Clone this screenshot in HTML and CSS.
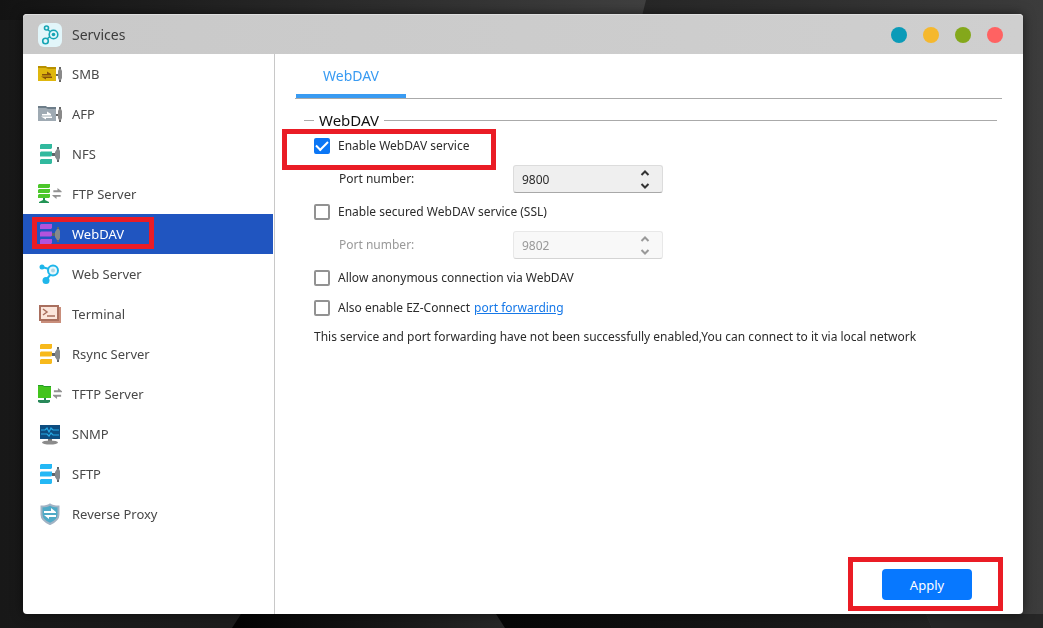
FILE: index.html
```html
<!DOCTYPE html>
<html lang="en">
<head>
<meta charset="utf-8">
<title>Services</title>
<link rel="stylesheet" href="styles.css">
</head>
<body>
<svg class="defs" aria-hidden="true">
  <defs>
    <symbol id="stack" viewBox="0 0 24 24">
      <path fill="#5f656a" d="M14 11h4v3h-4zM19 5h2v15h-2z"/>
      <path fill="#85898c" d="M19 7h2l1 2v7l-1 2h-2l-2-3v-5z"/>
      <path fill="currentColor" d="M3 2h11v4l-1 1H2V3zM3 9.500h11v4l-1 1H2v-4zM3 17h11v4l-1 1H2v-4z"/>
    </symbol>
    <symbol id="folder" viewBox="0 0 24 24">
      <path fill="#666" d="M18 12h2v2h-2zM21 5h2v15h-2z"/>
      <path fill="#898989" d="M20 9l1-2h2l1 2v7l-1 2h-2l-1-2z"/>
      <path class="folder-back" d="M0 4h8l1 1h9v4H0z"/>
      <path fill="currentColor" d="M0 6h8l2 1h8v12H0z"/>
      <path class="folder-arrows" d="M4 12h5V9.500l4 2.500v1.500H4zM14 14.500H3l5 3V16h6z"/>
    </symbol>
    <symbol id="swap" viewBox="0 0 10 12">
      <path fill="#929292" d="M1 2.500h4.500V0L10 3.500v1H1zM9 7.500H0v1L4.500 12V9.500H9z"/>
    </symbol>
  </defs>
</svg>
<svg class="wallpaper" viewBox="0 0 1043 628" preserveAspectRatio="none" aria-hidden="true">
  <defs>
    <linearGradient id="base"><stop offset="0" stop-color="#181818"/><stop offset=".6" stop-color="#262626"/><stop offset="1" stop-color="#3c3c3c"/></linearGradient>
    <linearGradient id="top"><stop offset="0" stop-color="#131313"/><stop offset="1" stop-color="#404040"/></linearGradient>
    <linearGradient id="band"><stop offset="0" stop-color="#030303"/><stop offset="1" stop-color="#272727"/></linearGradient>
    <linearGradient id="low"><stop offset="0" stop-color="#060606"/><stop offset="1" stop-color="#222"/></linearGradient>
  </defs>
  <path fill="url(#base)" d="M0 0h1043v628H0z"/>
  <path fill="url(#top)" d="M0 0h646l-5 20H0z"/>
  <path fill="url(#band)" d="M241 614h255l9 14H232z"/>
  <path fill="url(#low)" d="M496 614h430l6 14H505z"/>
  <path fill="#262626" d="M926 614h117v14H932z"/>
</svg>

<div class="desktop">
  <section class="window">
    <header class="titlebar">
      <svg class="app-icon" viewBox="0 0 24 24" aria-hidden="true">
        <rect width="24" height="24" rx="6" fill="#e2f6fa"/>
        <g fill="none" stroke="#16a5b4" stroke-width="1.600">
          <path d="M9.500 6.500l2.500 2M9 16l3-2.500"/>
          <circle cx="8.500" cy="5" r="2"/><circle cx="15.500" cy="11.500" r="4.300"/><circle cx="7.500" cy="18" r="2.800"/>
        </g>
        <circle cx="15.500" cy="11.500" r="1.800" fill="#16a5b4"/>
      </svg>
      <h1 class="title">Services</h1>
      <div class="window-buttons">
        <button class="dot teal" aria-label="Help"></button>
        <button class="dot amber" aria-label="Minimize"></button>
        <button class="dot green" aria-label="Maximize"></button>
        <button class="dot red" aria-label="Close"></button>
      </div>
    </header>

    <div class="body">
      <nav class="sidebar">
        <a class="item" href="#smb"><svg class="icon gold"><use href="#folder"/></svg>SMB</a>
        <a class="item" href="#afp"><svg class="icon slate"><use href="#folder"/></svg>AFP</a>
        <a class="item" href="#nfs"><svg class="icon mint"><use href="#stack"/></svg>NFS</a>
        <a class="item" href="#ftp"><svg class="icon" viewBox="0 0 24 24">
          <path fill="#4cc72b" d="M1 2h11v3l-1 1H0V3zM1 7h11v3l-1 1H0V8zM1 12h11v3l-1 1H0v-3z"/><path fill="#229455" d="M5 16h2v2l4 2v1H1v-1l4-2z"/>
          <use href="#swap" x="14" y="6" width="10" height="11"/></svg>FTP Server</a>
        <a class="item active" href="#webdav" aria-current="page"><svg class="icon violet"><use href="#stack"/></svg>WebDAV<span class="callout callout-nav"></span></a>
        <a class="item" href="#web"><svg class="icon" viewBox="0 0 24 24">
          <path fill="none" stroke="#1fb6ea" stroke-width="2" d="M4 5l7 2M13 12l-5 6"/>
          <circle cx="4" cy="5" r="2.500" fill="#1fb6ea"/><circle cx="8" cy="18.500" r="3.500" fill="#1fb6ea"/>
          <circle cx="15" cy="8.500" r="5" fill="#e9f8fd" stroke="#1fb6ea" stroke-width="2"/><circle cx="15" cy="8.500" r="2" fill="#b5d5e2"/></svg>Web Server</a>
        <a class="item" href="#terminal"><svg class="icon" viewBox="0 0 24 24">
          <path fill="#c98e7b" d="M3 5h20v16H3z"/><path fill="#fbe5db" stroke="#a96f5e" stroke-width="2" d="M2 4h18v14H2z"/>
          <path fill="none" stroke="#a96f5e" stroke-width="1.500" d="M5 7l4 3-4 3M9 14h8"/></svg>Terminal</a>
        <a class="item" href="#rsync"><svg class="icon orange"><use href="#stack"/></svg>Rsync Server</a>
        <a class="item" href="#tftp"><svg class="icon" viewBox="0 0 24 24">
          <path fill="#239c27" d="M0 3h5l1 1h7v3H0z"/><path fill="#43c41d" d="M0 4h5l1 1h7v11H0z"/><path fill="#29895a" d="M6 16h2v2h4v2l-2 1H2l-2-1v-2h6z"/>
          <use href="#swap" x="15" y="5" width="9" height="13"/></svg>TFTP Server</a>
        <a class="item" href="#snmp"><svg class="icon" viewBox="0 0 24 24">
          <path fill="#0d4d80" d="M2 3h20v14H2z"/><path fill="none" stroke="#25a9e5" stroke-width="1.200" d="M3 8h4l2-2 2 4 2-4 2 2h6M3 12h6l2 2 2-3 2 2h6"/>
          <path fill="#777" d="M10 17h4v2h-4z"/><ellipse cx="12" cy="20.500" rx="8" ry="2" fill="#8b8b8b"/></svg>SNMP</a>
        <a class="item" href="#sftp"><svg class="icon sky"><use href="#stack"/></svg>SFTP</a>
        <a class="item" href="#proxy"><svg class="icon" viewBox="0 0 24 24">
          <path fill="#4faac7" stroke="#a2b3c4" stroke-width="2" d="M12 2.500c2 1.500 5 2 8.500 2v8c0 5-4 7.500-8.500 9.500-4.500-2-8.500-4.500-8.500-9.500v-8c3.500 0 6.500-.5 8.500-2z"/>
          <path fill="#fff" d="M6 9h7V6l5 4v1H6zM18 13H6l5 4v-2h7z"/></svg>Reverse Proxy</a>
      </nav>

      <main class="content">
        <div class="tabs" role="tablist"><button class="tab" role="tab" aria-selected="true">WebDAV</button></div>
        <form class="form">
          <fieldset class="group">
            <legend class="legend">WebDAV</legend>
            <div class="row enable"><label class="check"><input class="box" type="checkbox" checked>Enable WebDAV service</label><span class="callout callout-enable"></span></div>
            <div class="row port">
              <label class="port-label" for="port">Port number:</label>
              <div class="spin"><input class="number" id="port" type="text" inputmode="numeric" value="9800">
                <div class="steps">
                  <button class="step" type="button" aria-label="Increase port"><svg class="chevron" viewBox="0 0 10 6"><path d="M1.500 5L5 1.500 8.500 5"/></svg></button>
                  <button class="step" type="button" aria-label="Decrease port"><svg class="chevron" viewBox="0 0 10 6"><path d="M1.500 1L5 4.500 8.500 1"/></svg></button>
                </div></div>
            </div>
            <div class="row"><label class="check"><input class="box" type="checkbox">Enable secured WebDAV service (SSL)</label></div>
            <div class="row port disabled">
              <label class="port-label" for="ssl-port">Port number:</label>
              <div class="spin"><input class="number" id="ssl-port" type="text" inputmode="numeric" value="9802" disabled>
                <div class="steps">
                  <button class="step" type="button" aria-label="Increase SSL port" disabled><svg class="chevron" viewBox="0 0 10 6"><path d="M1.500 5L5 1.500 8.500 5"/></svg></button>
                  <button class="step" type="button" aria-label="Decrease SSL port" disabled><svg class="chevron" viewBox="0 0 10 6"><path d="M1.500 1L5 4.500 8.500 1"/></svg></button>
                </div></div>
            </div>
            <div class="row"><label class="check"><input class="box" type="checkbox">Allow anonymous connection via WebDAV</label></div>
            <div class="row"><label class="check"><input class="box" type="checkbox">Also enable EZ-Connect</label><a class="link" href="#forwarding">port forwarding</a></div>
            <p class="note">This service and port forwarding have not been successfully enabled,You can connect to it via local network</p>
          </fieldset>
          <footer class="actions"><span class="apply-wrap"><button class="apply" type="submit">Apply</button><span class="callout callout-apply"></span></span></footer>
        </form>
      </main>
    </div>
  </section>
</div>
</body>
</html>
```
FILE: styles.css
```css
* { box-sizing: border-box; }
body { margin: 0; background: #222; color: #2b2b2b; font: 13px/20px "Noto Sans", "Open Sans", sans-serif; }
button, input { font: inherit; color: inherit; }
.defs { position: absolute; width: 0; height: 0; }
.wallpaper { position: fixed; inset: 0; width: 100%; height: 100%; z-index: -1; }
.desktop { display: flex; min-height: 100vh; padding: 14px 20px 14px 23px; }
.window { flex: 1; display: flex; flex-direction: column; background: #fff; border-radius: 4px; box-shadow: 0 0 12px #0008; }

.titlebar { display: flex; align-items: center; height: 40px; padding: 0 20px 0 15px; background: linear-gradient(90deg, #c9c9c9, #cfcfcf); border-top: 1px solid #dedede; border-radius: 4px 4px 0 0; }
.app-icon { width: 24px; height: 24px; }
.title { margin: 0 0 0 10px; font-size: 14px; font-weight: 400; color: #3c3c3c; }
.window-buttons { display: flex; gap: 16px; margin-left: auto; }
.dot { width: 16px; height: 16px; padding: 0; border: 0; border-radius: 50%; }
.teal { background: #0b9bb8; }
.amber { background: #f5b82e; }
.green { background: #84a81b; }
.red { background: #ff6262; }

.body { flex: 1; display: flex; }
.sidebar { flex: none; width: 252px; padding-right: 1px; border-right: 1px solid #c8c8c8; }
.item { position: relative; display: flex; align-items: center; gap: 10px; height: 40px; padding-left: 15px; color: #484848; font-size: 13px; text-decoration: none; }
.item.active { background: #2055c0; color: #fff; }
.icon { width: 24px; height: 24px; flex: none; }
.gold { color: #dfb70e; --back: #b79000; --arrows: #87520b; }
.slate { color: #9faab3; --back: #6d7d89; --arrows: #fff; }
.folder-back { fill: var(--back); }
.folder-arrows { fill: var(--arrows); }
.mint { color: #31b99e; }
.violet { color: #b153dc; }
.orange { color: #f7b91c; }
.sky { color: #24b8f5; }

.content { flex: 1; display: flex; flex-direction: column; min-width: 0; padding: 0 21px 0 20px; }
.tabs { display: flex; height: 45px; padding-left: 1px; border-bottom: 1px solid #aaa; }
.tab { width: 110px; padding: 3px 0 0; border: 0; border-bottom: 4px solid #399bf2; background: none; color: #399bf2; font-size: 14px; }
.form { flex: 1; display: flex; flex-direction: column; padding: 11px 5px 0 9px; font-size: 12px; }
.group { min-width: 0; margin: 0; padding: 0 0 0 10px; border: 0 solid #aaa; border-top-width: 1px; }
.legend { padding: 0 5px; font-size: 15px; line-height: 20px; color: #111; }
.row { display: flex; align-items: center; height: 28px; margin-top: 2px; }
.enable { position: relative; }
.port { margin: 5px 0; padding-left: 25px; }
.port-label { width: 174px; }
.disabled { color: #999; }
.check { display: flex; align-items: center; gap: 8px; }
.box { appearance: none; width: 16px; height: 16px; margin: 0; border: 2px solid #929292; border-radius: 2px; background: #fff; display: grid; place-items: center; }
.box:checked { background: #0b76f5; border-color: #0b76f5; }
.box:checked::before { content: ""; width: 10px; height: 5px; border: solid #fff; border-width: 0 0 2px 2px; transform: rotate(-45deg); margin-bottom: 3px; }
.spin { display: flex; width: 150px; height: 28px; border: 1px solid #dcdcdc; border-bottom-color: #a8a8a8; border-radius: 3px; background: #efefef; }
.disabled .spin { background: #f8f8f8; border-color: #e8e8e8; border-bottom-color: #d4d4d4; }
.number { width: 120px; padding: 2px 0 0 8px; border: 0; background: none; }
.steps { display: flex; flex-direction: column; width: 22px; }
.step { flex: 1; display: grid; place-items: center; padding: 0; border: 0; background: none; }
.chevron { width: 10px; height: 6px; fill: none; stroke: #333; stroke-width: 2; }
.disabled .chevron { stroke: #999; }
.link { margin-left: 4px; color: #1678e8; }
.note { margin: 5px 0 0; line-height: 20px; }
.actions { display: flex; justify-content: flex-end; margin-top: auto; padding: 0 25px 14px 0; }
.apply-wrap { position: relative; display: flex; }
.apply { width: 90px; height: 31px; padding: 0; border: 0; border-radius: 4px; background: #0778ff; color: #fff; font-size: 13px; }

.callout { position: absolute; border: 5px solid #ea1c25; pointer-events: none; }
.callout-nav { left: 9px; top: 3px; width: 122px; height: 32px; }
.callout-enable { left: -32px; top: -3px; width: 214px; height: 41px; }
.callout-apply { left: -34px; top: -12px; width: 155px; height: 54px; }
```
